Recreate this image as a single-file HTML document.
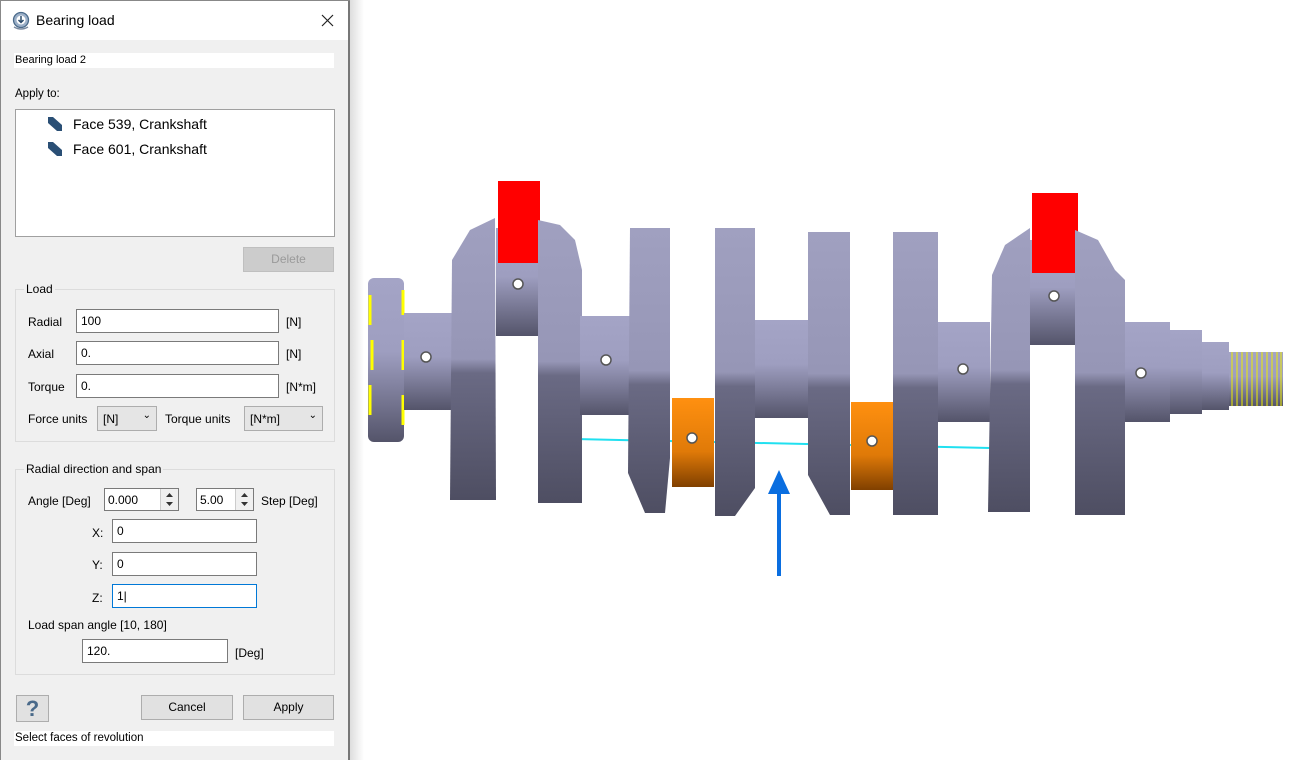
<!DOCTYPE html>
<html><head><meta charset="utf-8">
<style>
*{box-sizing:border-box;margin:0;padding:0}
body{width:1305px;height:760px;overflow:hidden;background:#fff;font-family:"Liberation Sans",sans-serif;font-size:12px;color:#000;position:relative}
.dlg{position:absolute;left:0;top:0;width:350px;height:760px;background:#f0f0f0;border-right:2px solid #777}
.title{position:absolute;left:0;top:0;width:348px;height:40px;background:#fff}
.abs{position:absolute}
.inp{position:absolute;background:#fff;border:1px solid #7a7a7a;height:24px;padding:4px 4px 0;font-size:12px}
.btn{position:absolute;background:#e1e1e1;border:1px solid #adadad;text-align:center;line-height:23px;height:25px;font-size:12px}
.grp{position:absolute;border:1px solid #dcdcdc}
.lg{position:absolute;background:#f0f0f0;padding:0 2px}
.combo{position:absolute;background:#e5e5e5;border:1px solid #adadad;height:25px;padding:5px 5px 0}
.spin{position:absolute;right:0;top:0;width:18px;height:100%;border-left:1px solid #ccc;background:#f0f0f0}
.shadow{position:absolute;left:350px;top:0;width:14px;height:760px;background:linear-gradient(90deg,#ddd,#fff)}
</style></head><body>
<div class="shadow"></div>
<div class="dlg">
 <div class="title">
  <svg class="abs" style="left:11px;top:11px" width="20" height="20" viewBox="0 0 20 20"><circle cx="10" cy="9" r="7.5" fill="#9cb0c8" stroke="#4a6a8a" stroke-width="1.3"/><circle cx="10" cy="9" r="4.5" fill="#fff"/><path d="M10 5v6M7.5 9l2.5 2.5 2.5-2.5" stroke="#2a4a6a" stroke-width="1.5" fill="none"/><path d="M3 16q7 4 14 0" stroke="#7a8aa0" stroke-width="1.5" fill="none"/></svg>
  <div class="abs" style="left:36px;top:12px;font-size:14px">Bearing load</div>
  <svg class="abs" style="left:321px;top:14px" width="13" height="13"><path d="M1 1L12 12M12 1L1 12" stroke="#222" stroke-width="1.2"/></svg>
 </div>
 <div class="abs" style="left:0;top:0;width:1px;height:760px;background:#888"></div>
 <div class="abs" style="left:0;top:0;width:350px;height:1px;background:#888"></div>
 <div class="abs" style="left:14px;top:53px;width:320px;height:15px;background:#fff;font-size:11px;padding-left:1px;padding-top:1px">Bearing load 2</div>
 <div class="abs" style="left:15px;top:88px;font-size:11.5px">Apply to:</div>
 <div class="abs" style="left:15px;top:109px;width:320px;height:128px;background:#fff;border:1px solid #a0a0a0">
  <svg class="abs" style="left:31px;top:5px" width="16" height="16"><path d="M1 2h5l9 8v6h-5L1 8z" fill="#2a4f75"/></svg>
  <div class="abs" style="left:57px;top:6px;font-size:14px">Face 539, Crankshaft</div>
  <svg class="abs" style="left:31px;top:30px" width="16" height="16"><path d="M1 2h5l9 8v6h-5L1 8z" fill="#2a4f75"/></svg>
  <div class="abs" style="left:57px;top:31px;font-size:14px">Face 601, Crankshaft</div>
 </div>
 <div class="btn" style="left:243px;top:247px;width:91px;color:#9a9a9a;background:#ccc;border-color:#bfbfbf">Delete</div>

 <div class="grp" style="left:15px;top:289px;width:320px;height:153px"></div>
 <div class="lg" style="left:24px;top:282px">Load</div>
 <div class="abs" style="left:28px;top:315px">Radial</div>
 <div class="inp" style="left:76px;top:309px;width:203px">100</div>
 <div class="abs" style="left:286px;top:315px">[N]</div>
 <div class="abs" style="left:28px;top:347px">Axial</div>
 <div class="inp" style="left:76px;top:341px;width:203px">0.</div>
 <div class="abs" style="left:286px;top:347px">[N]</div>
 <div class="abs" style="left:28px;top:380px">Torque</div>
 <div class="inp" style="left:76px;top:374px;width:203px">0.</div>
 <div class="abs" style="left:286px;top:380px">[N*m]</div>
 <div class="abs" style="left:28px;top:412px">Force units</div>
 <div class="combo" style="left:97px;top:406px;width:60px">[N]<span style="position:absolute;right:5px;top:3px;font-size:10px">&#8964;</span></div>
 <div class="abs" style="left:165px;top:412px">Torque units</div>
 <div class="combo" style="left:244px;top:406px;width:79px">[N*m]<span style="position:absolute;right:5px;top:3px;font-size:10px">&#8964;</span></div>

 <div class="grp" style="left:15px;top:469px;width:320px;height:206px"></div>
 <div class="lg" style="left:24px;top:462px">Radial direction and span</div>
 <div class="abs" style="left:28px;top:494px">Angle [Deg]</div>
 <div class="inp" style="left:104px;top:488px;width:75px;height:23px;padding:4px 3px 0">0.000<div class="spin"><svg width="17" height="21"><path d="M5 8l3.5-4 3.5 4zM5 13l3.5 4 3.5-4z" fill="#333"/></svg></div></div>
 <div class="inp" style="left:196px;top:488px;width:58px;height:23px;padding:4px 3px 0">5.00<div class="spin"><svg width="17" height="21"><path d="M5 8l3.5-4 3.5 4zM5 13l3.5 4 3.5-4z" fill="#333"/></svg></div></div>
 <div class="abs" style="left:261px;top:494px">Step [Deg]</div>
 <div class="abs" style="left:92px;top:526px">X:</div>
 <div class="inp" style="left:112px;top:519px;width:145px">0</div>
 <div class="abs" style="left:92px;top:558px">Y:</div>
 <div class="inp" style="left:112px;top:552px;width:145px">0</div>
 <div class="abs" style="left:92px;top:591px">Z:</div>
 <div class="inp" style="left:112px;top:584px;width:145px;border-color:#0078d7">1|</div>
 <div class="abs" style="left:28px;top:618px">Load span angle [10, 180]</div>
 <div class="inp" style="left:82px;top:639px;width:146px">120.</div>
 <div class="abs" style="left:235px;top:646px">[Deg]</div>

 <div class="btn" style="left:16px;top:695px;width:33px;height:27px;font-size:22px;line-height:25px;color:#4a6a8a;font-weight:bold">?</div>
 <div class="btn" style="left:141px;top:695px;width:92px">Cancel</div>
 <div class="btn" style="left:243px;top:695px;width:91px">Apply</div>
 <div class="abs" style="left:14px;top:731px;width:320px;height:15px;background:#fff;font-size:11.5px;padding-left:1px;padding-top:1px">Select faces of revolution</div>
</div>

<svg class="abs" style="left:0;top:0" width="1305" height="760" viewBox="0 0 1305 760">
<defs>
<linearGradient id="cy" x1="0" y1="0" x2="0" y2="1"><stop offset="0" stop-color="#a4a4c6"/><stop offset=".45" stop-color="#9e9ec0"/><stop offset="1" stop-color="#54546a"/></linearGradient>
<linearGradient id="wb" x1="0" y1="0" x2="0" y2="1"><stop offset="0" stop-color="#a0a0c0"/><stop offset=".5" stop-color="#9696b6"/><stop offset=".55" stop-color="#6a6a84"/><stop offset="1" stop-color="#4e4e62"/></linearGradient>
<linearGradient id="or" x1="0" y1="0" x2="0" y2="1"><stop offset="0" stop-color="#ff9010"/><stop offset=".6" stop-color="#e07a08"/><stop offset="1" stop-color="#804000"/></linearGradient>
</defs>
<line x1="575" y1="439" x2="990" y2="448" stroke="#20e0f0" stroke-width="2"/>
<rect x="368" y="278" width="36" height="164" rx="6" fill="url(#cy)"/>
<path d="M370 295v30M372 340v30M370 385v30M403 290v25M403 340v30M403 395v30" stroke="#ff0" stroke-width="3"/>
<rect x="404" y="313" width="48" height="97" fill="url(#cy)"/>
<path d="M452 260L470 230 495 218 496 500 450 500z" fill="url(#wb)"/>
<rect x="496" y="228" width="44" height="108" fill="url(#cy)"/>
<rect x="498" y="181" width="42" height="82" fill="#f00"/>
<path d="M538 220L560 225 575 240 582 270 582 503 538 503z" fill="url(#wb)"/>
<rect x="580" y="316" width="52" height="99" fill="url(#cy)"/>
<path d="M630 228h40v230l-5 55h-20l-17-40z" fill="url(#wb)"/>
<rect x="672" y="398" width="42" height="89" fill="url(#or)"/>
<path d="M715 228h40v260l-20 28h-20z" fill="url(#wb)"/>
<rect x="755" y="320" width="60" height="98" fill="url(#cy)"/>
<path d="M808 232h42v283h-20l-22-40z" fill="url(#wb)"/>
<rect x="851" y="402" width="42" height="88" fill="url(#or)"/>
<path d="M893 232h45v283h-45z" fill="url(#wb)"/>
<rect x="938" y="322" width="52" height="100" fill="url(#cy)"/>
<path d="M992 275L1005 245 1030 228 1030 512 988 512z" fill="url(#wb)"/>
<rect x="1030" y="240" width="45" height="105" fill="url(#cy)"/>
<rect x="1032" y="193" width="46" height="80" fill="#f00"/>
<path d="M1075 230L1098 240 1115 270 1125 280 1125 515 1075 515z" fill="url(#wb)"/>
<rect x="1125" y="322" width="45" height="100" fill="url(#cy)"/>
<rect x="1170" y="330" width="32" height="84" fill="url(#cy)"/>
<rect x="1202" y="342" width="27" height="68" fill="url(#cy)"/>
<rect x="1229" y="352" width="54" height="54" fill="url(#cy)"/>
<path d="M1232 352v54M1237 352v54M1242 352v54M1247 352v54M1252 352v54M1257 352v54M1262 352v54M1267 352v54M1272 352v54M1277 352v54M1281 352v54" stroke="#ee0" stroke-width="1"/>
<g fill="#fff" stroke="#555" stroke-width="1.5"><circle cx="518" cy="284" r="5"/><circle cx="426" cy="357" r="5"/><circle cx="606" cy="360" r="5"/><circle cx="692" cy="438" r="5"/><circle cx="872" cy="441" r="5"/><circle cx="963" cy="369" r="5"/><circle cx="1054" cy="296" r="5"/><circle cx="1141" cy="373" r="5"/></g>
<rect x="777" y="490" width="4" height="86" fill="#0a6ee0"/>
<path d="M768 494L779 470 790 494z" fill="#0a6ee0"/>
</svg>
</body></html>
